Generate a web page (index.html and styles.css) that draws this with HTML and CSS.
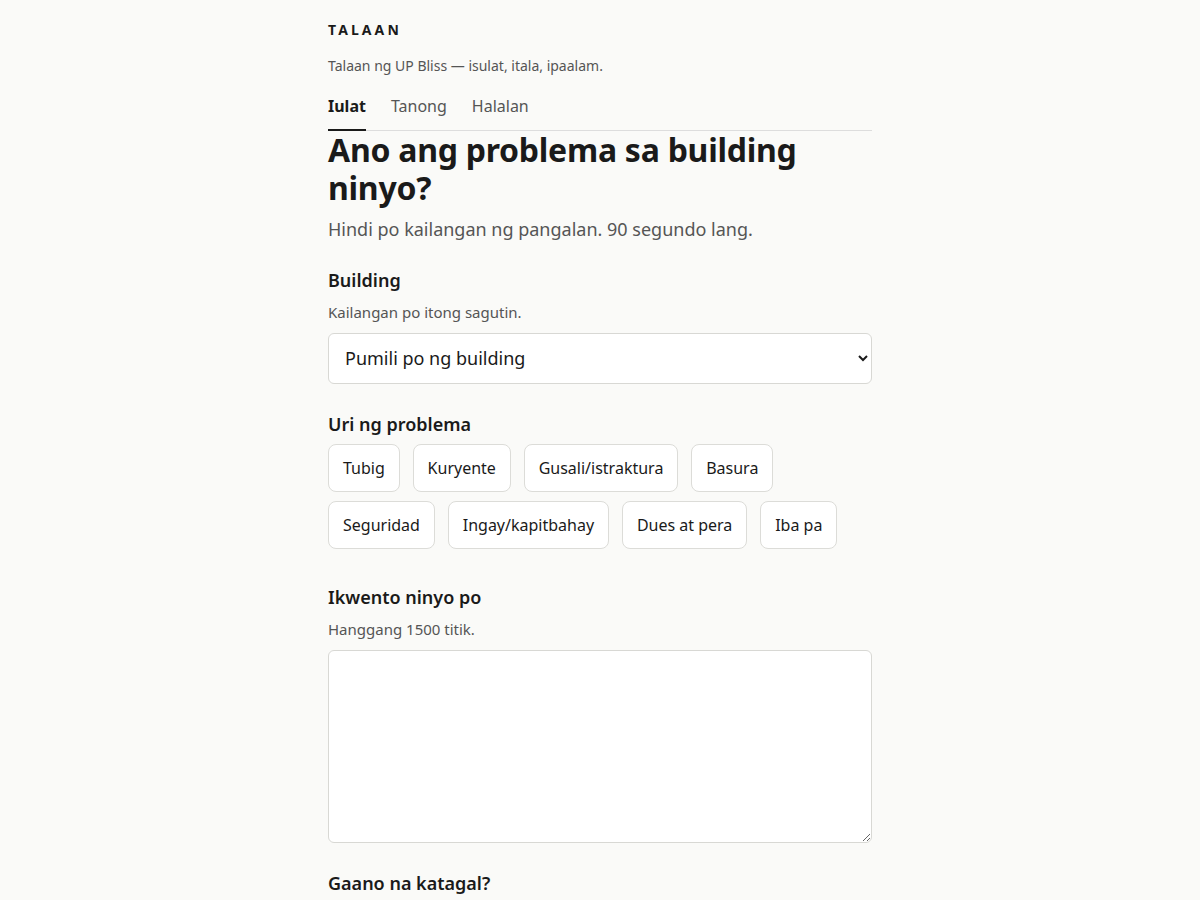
FILE: index.html
```html
<!DOCTYPE html>
<html lang="fil">
<head>
<meta charset="utf-8">
<title>Talaan</title>
<link rel="stylesheet" href="styles.css">
</head>
<body>
<div class="page">
  <header class="site-header">
    <div class="brand">TALAAN</div>
    <p class="tagline">Talaan ng UP Bliss — isulat, itala, ipaalam.</p>
    <nav class="tabs">
      <a class="tab active" href="#">Iulat</a>
      <a class="tab" href="#">Tanong</a>
      <a class="tab" href="#">Halalan</a>
    </nav>
  </header>
  <main>
    <h1 class="title">Ano ang problema sa building ninyo?</h1>
    <p class="lead">Hindi po kailangan ng pangalan. 90 segundo lang.</p>
    <form class="form">
      <div class="field">
        <label class="label" for="building">Building</label>
        <p class="help">Kailangan po itong sagutin.</p>
        <select id="building" class="select">
          <option>Pumili po ng building</option>
        </select>
      </div>
      <fieldset class="field chips-field">
        <legend class="label">Uri ng problema</legend>
        <div class="chips">
          <button type="button" class="chip">Tubig</button>
          <button type="button" class="chip">Kuryente</button>
          <button type="button" class="chip">Gusali/istraktura</button>
          <button type="button" class="chip">Basura</button>
          <button type="button" class="chip">Seguridad</button>
          <button type="button" class="chip">Ingay/kapitbahay</button>
          <button type="button" class="chip">Dues at pera</button>
          <button type="button" class="chip">Iba pa</button>
        </div>
      </fieldset>
      <div class="field">
        <label class="label" for="story">Ikwento ninyo po</label>
        <p class="help">Hanggang 1500 titik.</p>
        <textarea id="story" class="textarea"></textarea>
      </div>
      <div class="field">
        <div class="label">Gaano na katagal?</div>
      </div>
    </form>
  </main>
</div>
</body>
</html>
```

FILE: styles.css
```css
* { box-sizing: border-box; }
html, body { margin: 0; padding: 0; }
body {
  background: #fafaf8;
  color: #1a1a1a;
  font-family: "Noto Sans", "Open Sans", sans-serif;
  font-size: 16px;
  line-height: 1.5;
}
.page {
  max-width: 544px;
  margin: 0 auto;
  padding-top: 20px;
}
.brand {
  font-size: 14px;
  font-weight: 700;
  letter-spacing: 0.22em;
  line-height: 20px;
  color: #1a1a1a;
}
.tagline {
  margin: 16px 0 0;
  font-size: 14px;
  line-height: 20px;
  color: #555;
}
.tabs {
  display: flex;
  gap: 25px;
  margin-top: 14px;
  border-bottom: 1px solid #ddd;
}
.tab {
  display: block;
  padding: 4px 0 11px;
  font-size: 16px;
  line-height: 24px;
  color: #555;
  text-decoration: none;
  border-bottom: 2px solid transparent;
  margin-bottom: -1px;
}
.tab.active {
  color: #1a1a1a;
  font-weight: 700;
  border-bottom-color: #1a1a1a;
}
.title {
  margin: 0;
  font-size: 32px;
  line-height: 38.4px;
  letter-spacing: -0.008em;
  font-weight: 700;
  color: #1a1a1a;
}
.lead {
  margin: 8px 0 0;
  font-size: 18px;
  line-height: 27px;
  color: #555;
}
.form {
  display: flex;
  flex-direction: column;
  gap: 28px;
  margin-top: 25px;
}
.field {
  display: flex;
  flex-direction: column;
  margin: 0;
  padding: 0;
  border: 0;
  min-width: 0;
}
.label {
  display: block;
  padding: 0;
  font-size: 18px;
  font-weight: 600;
  line-height: 25.2px;
  color: #1a1a1a;
}
.chips-field .label { float: left; width: 100%; margin-bottom: 7px; }
.chips-field { padding-bottom: 8px; }
.help {
  margin: 8px 0 9px;
  font-size: 15px;
  line-height: 22.5px;
  color: #555;
}
.select {
  width: 100%;
  height: 51.2px;
  padding: 0 12px;
  font-family: inherit;
  font-size: 18px;
  color: #1a1a1a;
  background: #fff;
  border: 1px solid #d8d8d4;
  border-radius: 6px;
}
.chips {
  clear: both;
  display: flex;
  flex-wrap: wrap;
  gap: 8.5px 12.8px;
}
.chip {
  padding: 12px 14px;
  font-family: inherit;
  font-size: 16px;
  line-height: 22.4px;
  color: #1a1a1a;
  background: #fff;
  border: 1px solid #dcdcd8;
  border-radius: 8px;
  cursor: pointer;
}
.textarea {
  width: 100%;
  height: 193px;
  padding: 12px 16px;
  font-family: inherit;
  font-size: 18px;
  background: #fff;
  border: 1px solid #d8d8d4;
  border-radius: 6px;
  resize: vertical;
}
```
